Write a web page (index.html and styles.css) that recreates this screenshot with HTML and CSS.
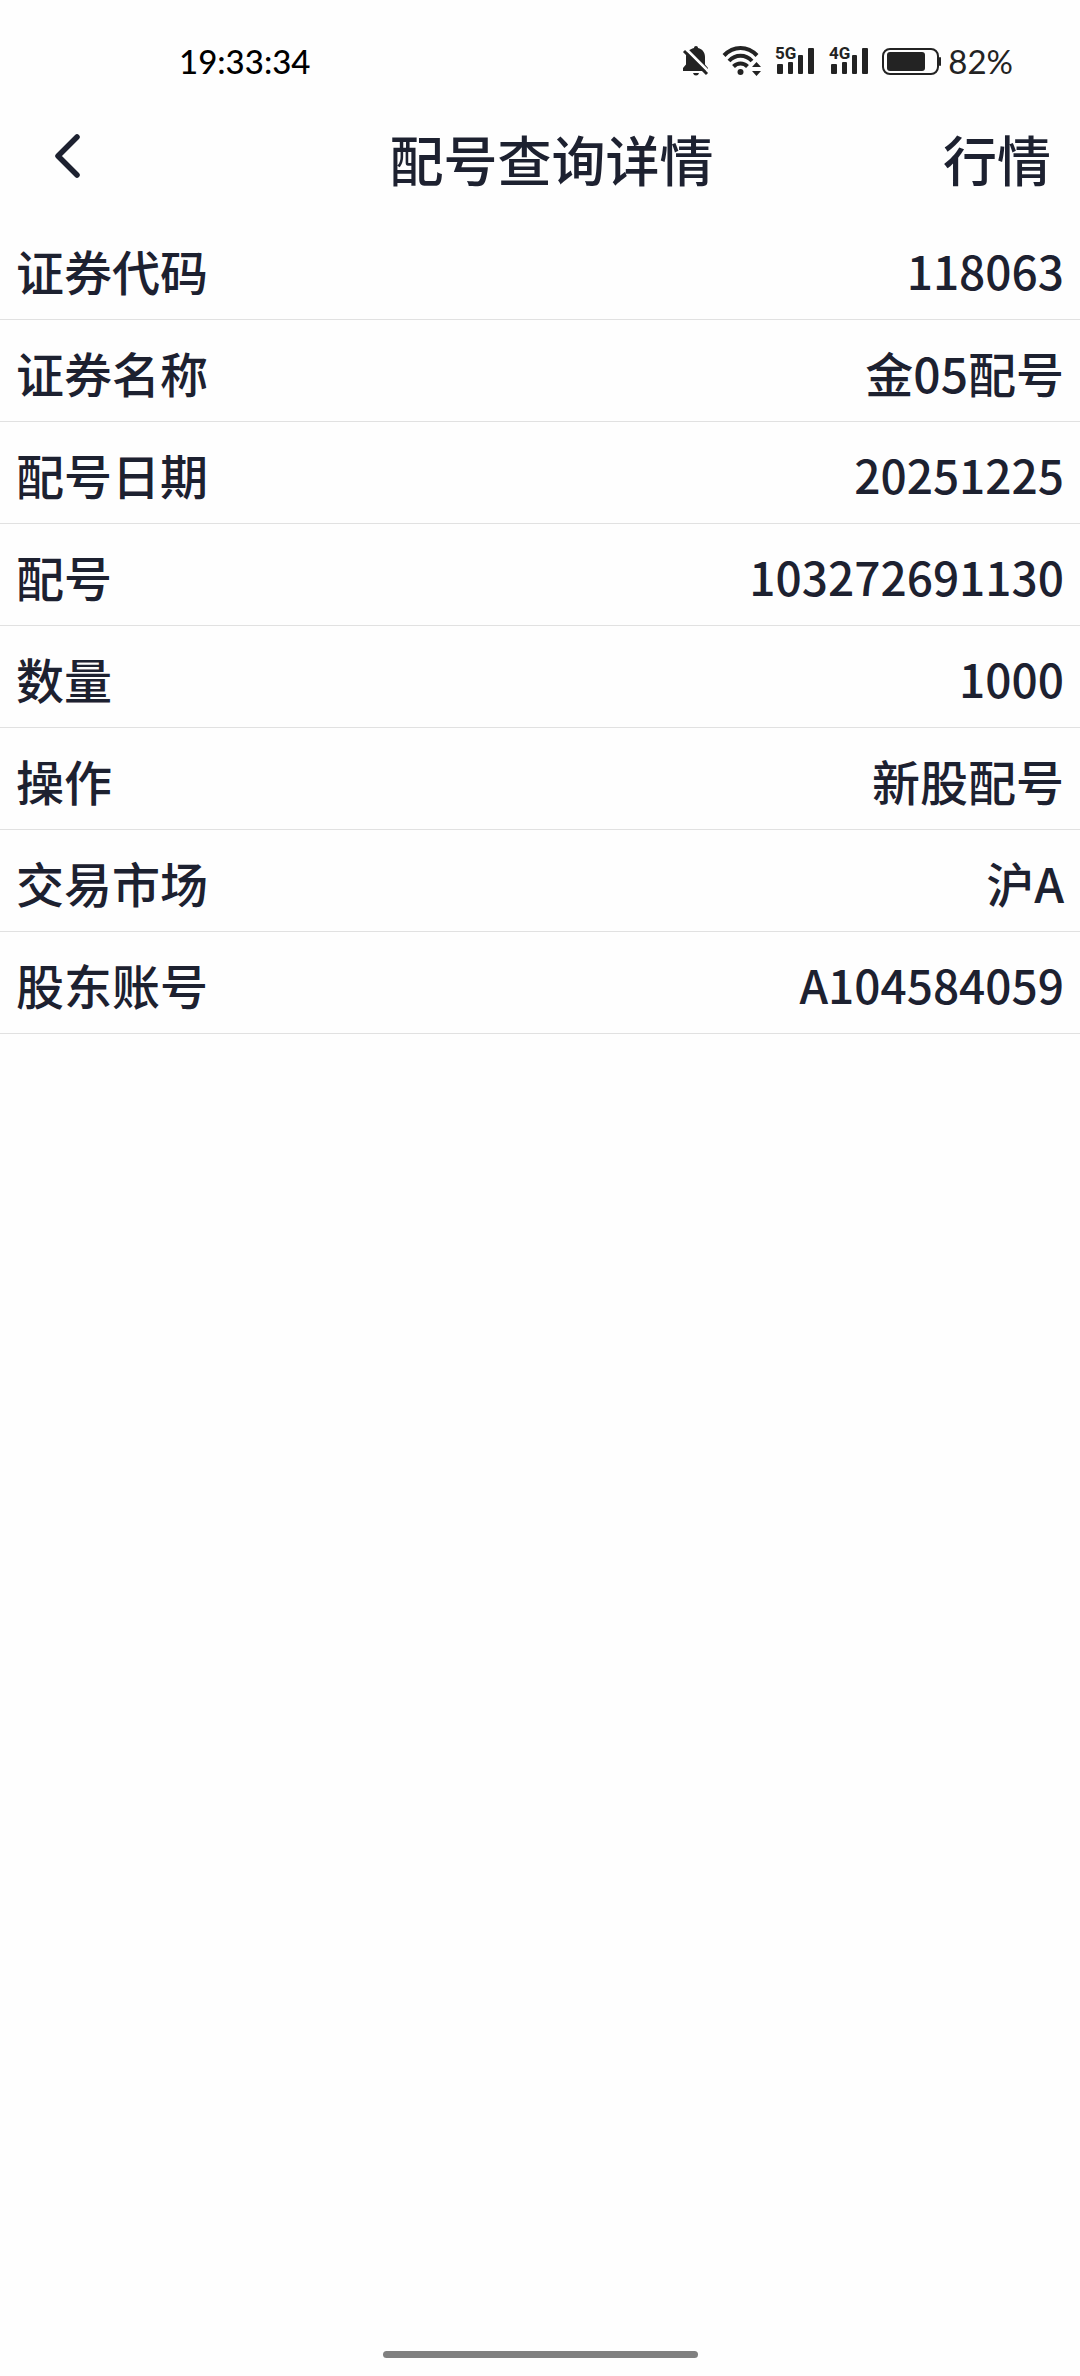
FILE: index.html
```html
<!DOCTYPE html>
<html lang="zh-CN">
<head>
<meta charset="UTF-8">
<meta name="viewport" content="width=device-width, initial-scale=1.0">
<title>配号查询详情</title>
<link rel="stylesheet" href="styles.css">
</head>
<body>

  <div class="status-bar">
    <span class="time">19:33:34</span>
    <div class="status-icons">
      <svg class="bell" width="28" height="32" viewBox="0 0 28 32" aria-hidden="true">
        <path d="M14 1c1.200 0 2 .8 2 2 4.500 1 7 4.500 7 9v7.500l3 3.500v3H1v-3l3-3.500V12c0-4.500 3.500-8 8-9 0-1.200.8-2 2-2z" fill="#232323"/>
        <path d="M11 28h6c-.5 1.700-1.500 2.500-3 2.500s-2.500-.8-3-2.500z" fill="#232323"/>
        <path d="M3.500 3.500L28.500 28.500" stroke="#fefefe" stroke-width="3"/>
        <path d="M2 6L25 29" stroke="#232323" stroke-width="3"/>
      </svg>
      <svg class="wifi" width="40" height="32" viewBox="0 0 40 32" aria-hidden="true">
        <g fill="none" stroke="#232323" stroke-width="4">
          <path d="M2 10.500C11.500.5 25.500.5 35 10.500"/>
          <path d="M7 16C13.500 9 23.500 9 30 16"/>
          <path d="M11.500 21.500C15.500 17.500 21.500 17.500 25.500 21.500"/>
        </g>
        <circle cx="18.500" cy="27" r="3" fill="#232323"/>
        <path d="M30 22l4.500-5 4.500 5zM30 26h9l-4.500 5z" fill="#232323"/>
      </svg>
      <svg class="signal" width="42" height="40" viewBox="0 -4 42 40" aria-hidden="true">
        <text x="1" y="14" class="net">5G</text>
        <g fill="#232323">
          <rect x="3" y="19" width="6" height="10" rx="1"/>
          <rect x="14" y="17" width="5" height="12" rx="1"/>
          <rect x="24" y="10" width="5" height="19" rx="1"/>
          <rect x="34" y="3" width="6" height="26" rx="1"/>
        </g>
      </svg>
      <svg class="signal" width="42" height="40" viewBox="0 -4 42 40" aria-hidden="true">
        <text x="1" y="14" class="net">4G</text>
        <g fill="#232323">
          <rect x="3" y="19" width="6" height="10" rx="1"/>
          <rect x="14" y="17" width="5" height="12" rx="1"/>
          <rect x="24" y="10" width="5" height="19" rx="1"/>
          <rect x="34" y="3" width="6" height="26" rx="1"/>
        </g>
      </svg>
      <svg class="battery" width="60" height="32" viewBox="0 0 60 32" aria-hidden="true">
        <rect x="1" y="4" width="55" height="25" rx="7" fill="none" stroke="#232323" stroke-width="2"/>
        <rect x="5" y="7" width="38" height="19" rx="3" fill="#232323"/>
        <rect x="57" y="12" width="2" height="9" rx="1" fill="#232323"/>
      </svg>
      <span class="percent">82%</span>
    </div>
  </div>

  <header>
    <button class="back" type="button" aria-label="返回">
      <svg width="30" height="46" viewBox="0 0 30 46" aria-hidden="true">
        <path d="M25 4L6 23L25 42" fill="none" stroke="#1d2130" stroke-width="5.500" stroke-linecap="round" stroke-linejoin="round"/>
      </svg>
    </button>
    <h1>配号查询详情</h1>
    <a class="quote" href="#">行情</a>
  </header>

  <main>
    <table class="detail">
      <tr><th scope="row">证券代码</th><td class="number">118063</td></tr>
      <tr><th scope="row">证券名称</th><td>金05配号</td></tr>
      <tr><th scope="row">配号日期</th><td class="number">20251225</td></tr>
      <tr><th scope="row">配号</th><td class="number">103272691130</td></tr>
      <tr><th scope="row">数量</th><td class="number">1000</td></tr>
      <tr><th scope="row">操作</th><td>新股配号</td></tr>
      <tr><th scope="row">交易市场</th><td>沪A</td></tr>
      <tr><th scope="row">股东账号</th><td class="number">A104584059</td></tr>
    </table>
  </main>

  <footer>
    <div class="home-bar"></div>
  </footer>

</body>
</html>
```

FILE: styles.css
```css
* {
  box-sizing: border-box;
}
body {
  margin: 0;
  min-height: 100vh;
  display: flex;
  flex-direction: column;
  background-color: #fefefe;
  color: #1d2130;
  font-family: "Noto Sans CJK SC", sans-serif;
}

/* status bar */
.status-bar {
  display: flex;
  justify-content: space-between;
  align-items: center;
  padding: 41px 67px 15px 179px;
  font-family: Lato, sans-serif;
  font-size: 33px;
  line-height: 32px;
}
.time {
  color: #000;
  font-weight: 500;
}
.status-icons {
  display: flex;
  align-items: center;
  color: #232323;
}
.status-icons svg {
  display: block;
}
.bell,
.wifi,
.signal {
  margin-right: 12px;
}
.battery {
  margin-right: 6px;
}
.net {
  font-family: "Liberation Sans Narrow", Roboto, sans-serif;
  font-size: 17px;
  font-weight: 700;
  fill: #232323;
}

/* title bar */
header {
  display: grid;
  grid-template-columns: 1fr auto 1fr;
  align-items: center;
  height: 122px;
  padding: 0 29px 2px 52px;
}
h1,
.quote {
  margin: 0;
  padding-top: 6px;
  font-size: 54px;
  font-weight: 500;
  line-height: 80px;
}
.quote {
  justify-self: end;
  color: inherit;
  text-decoration: none;
}
.back {
  justify-self: start;
  padding: 0;
  border: none;
  background: none;
  cursor: pointer;
}
.back svg {
  display: block;
}

/* detail rows */
.detail {
  width: 100%;
  border-spacing: 0;
}
.detail th,
.detail td {
  padding: 18px 16px 14px;
  border-bottom: 1px solid #e1e1e1;
  font-size: 48px;
  font-weight: 500;
  line-height: 69px;
  text-align: left;
}
.detail td {
  text-align: right;
}
.detail .number {
  font-size: 46px;
}

footer {
  margin-top: auto;
  padding-bottom: 18px;
}
.home-bar {
  width: 315px;
  height: 7px;
  margin: 0 auto;
  border-radius: 4px;
  background-color: #808080;
}
```
